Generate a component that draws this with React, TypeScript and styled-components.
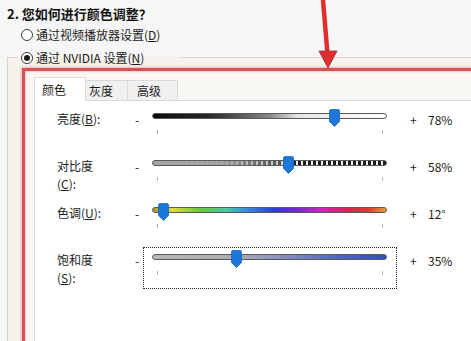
import React from 'react';
import styled, { createGlobalStyle } from 'styled-components';

const Global = createGlobalStyle`
  html, body { margin: 0; padding: 0; background: #f6f6f6; }
  body { font-family: "Noto Sans CJK SC", "Noto Sans", sans-serif; color: #1b1b1b; }
  #root { width: 471px; height: 341px; overflow: hidden; }
`;

const Page = styled.div`
  position: relative;
  width: 471px;
  height: 341px;
  overflow: hidden;
  background: #f6f6f6;
`;

const Title = styled.div`
  padding: 5px 0 0 7px;
  font-size: 13px;
  font-weight: 700;
  line-height: 18px;
  color: #111;
`;

const RadioLabel = styled.label`
  display: flex;
  align-items: center;
  gap: 3px;
  font-size: 12px;
  line-height: 17px;
  color: #1b1b1b;
  white-space: nowrap;
`;

const TopRadio = styled(RadioLabel)`
  margin: 3px 0 0 21px;
`;

const Circle = styled.span<{ $on?: boolean }>`
  box-sizing: border-box;
  width: 12px;
  height: 12px;
  border-radius: 50%;
  border: 1px solid #3a3a3a;
  background: #fff;
  display: flex;
  align-items: center;
  justify-content: center;
  &::after {
    content: '';
    width: 6px;
    height: 6px;
    border-radius: 50%;
    background: ${(p) => (p.$on ? '#1a1a1a' : 'transparent')};
  }
`;

const Key = styled.span`
  text-decoration: underline;
`;

const Group = styled.fieldset`
  margin: 6px 0 0 7px;
  padding: 0;
  border: 1px solid #d4d4d4;
  border-right: none;
  border-bottom: none;
  background: #f4f2eb;
  min-width: 0;
  height: 300px;
`;

const Legend = styled.legend`
  margin-left: 10px;
  padding: 0 37px 0 3px;
`;

const Highlight = styled.div`
  margin: 2px 0 0 14px;
  width: 470px;
  height: 290px;
  border: 3px solid #d8505a;
  box-shadow: 0 0 2px 1px rgba(225, 110, 120, 0.45), inset 0 0 2px 1px rgba(225, 110, 120, 0.3);
  background: #f9f7f3;
  padding: 6px 0 0 9px;
`;

const TabStrip = styled.div`
  display: flex;
  align-items: flex-end;
  height: 23px;
`;

const Tab = styled.div<{ $active?: boolean; $w: number; $pl: number; $first?: boolean }>`
  box-sizing: border-box;
  width: ${(p) => p.$w}px;
  padding-left: ${(p) => p.$pl}px;
  padding-top: ${(p) => (p.$active ? 3 : 1)}px;
  height: ${(p) => (p.$active ? 24 : 20)}px;
  margin-bottom: ${(p) => (p.$active ? -1 : 0)}px;
  font-size: 12px;
  line-height: 17px;
  color: #1b1b1b;
  background: ${(p) => (p.$active ? '#fff' : '#f0f0f0')};
  border: 1px solid #d9d9d9;
  border-bottom: none;
  border-left: ${(p) => (p.$first ? '1px solid #d9d9d9' : 'none')};
  position: relative;
  z-index: ${(p) => (p.$active ? 1 : 0)};
`;

const Panel = styled.div`
  background: #fff;
  border-top: 1px solid #d9d9d9;
  border-left: 1px solid #d9d9d9;
  height: 260px;
  padding: 5px 0 0 22px;
  display: grid;
  grid-template-columns: 78px 8px 254px 31px auto;
  grid-auto-rows: 42px;
  row-gap: 5px;
  align-content: start;
`;

const Label = styled.div`
  padding-top: 4px;
  max-width: 50px;
  font-size: 12px;
  line-height: 18px;
  color: #1b1b1b;
`;

const Sign = styled.div<{ $pl?: number }>`
  padding-top: 5px;
  padding-left: ${(p) => p.$pl ?? 0}px;
  font-size: 12px;
  line-height: 17px;
  color: #1b1b1b;
`;

const SliderBox = styled.div<{ $focus?: boolean }>`
  box-sizing: border-box;
  height: 42px;
  border: 1px dotted ${(p) => (p.$focus ? '#222' : 'transparent')};
`;

type Kind = 'bright' | 'contrast' | 'hue' | 'sat';

const trackBg: Record<Kind, string> = {
  bright: 'linear-gradient(to right, #0a0a0a 0%, #2a2a2a 25%, #888 50%, #e6e6e6 62%, #fff 100%)',
  contrast:
    'linear-gradient(to right, #a4a4a4 0%, rgba(164,164,164,0.95) 30%, rgba(164,164,164,0.4) 55%, rgba(164,164,164,0) 62%), repeating-linear-gradient(to right, #1a1a1a 0 3px, #f2f2f2 3px 5px)',
  hue: 'linear-gradient(to right, #a89432 0%, #e0dc40 8%, #6cc83c 20%, #48c8a8 32%, #3a8ee0 40%, #2a3cd0 52%, #7a2ad0 62%, #c828b8 72%, #d02850 84%, #d83a30 92%, #e0a040 100%)',
  sat: 'linear-gradient(to right, #b8b8b8 0%, #acacb2 35%, #8a90bc 55%, #5068c4 78%, #3050c0 100%)',
};

const Track = styled.div<{ $kind: Kind }>`
  position: relative;
  box-sizing: border-box;
  height: 6px;
  margin: 6px 9px 0 8px;
  border: 1px solid #5a5a5a;
  border-radius: 3px;
  background: ${(p) => trackBg[p.$kind]};
`;

const Thumb = styled.svg`
  position: absolute;
  top: -5px;
  width: 11px;
  height: 18px;
  overflow: visible;
`;

const Ticks = styled.div`
  display: flex;
  justify-content: space-between;
  padding: 0 13px;
  margin-top: 11px;
`;

const Tick = styled.span`
  width: 1px;
  height: 4px;
  background: #b8b8b8;
`;

const Arrow = styled.svg`
  position: absolute;
  left: 310px;
  top: 0;
  width: 30px;
  height: 72px;
  z-index: 5;
`;

type Row = { label: React.ReactNode; kind: Kind; pct: number; value: string; focus?: boolean };

const rows: Row[] = [
  { label: <>亮度(<Key>B</Key>):</>, kind: 'bright', pct: 78, value: '78%' },
  { label: <>对比度(<Key>C</Key>):</>, kind: 'contrast', pct: 58, value: '58%' },
  { label: <>色调(<Key>U</Key>):</>, kind: 'hue', pct: 4.7, value: '12°' },
  { label: <>饱和度(<Key>S</Key>):</>, kind: 'sat', pct: 36, value: '35%', focus: true },
];

export default function App() {
  return (
    <Page>
      <Global />
      <Title>2. 您如何进行颜色调整？</Title>
      <TopRadio>
        <Circle />
        <span>通过视频播放器设置(<Key>D</Key>)</span>
      </TopRadio>
      <Group>
        <Legend>
          <RadioLabel>
            <Circle $on />
            <span>通过 NVIDIA 设置(<Key>N</Key>)</span>
          </RadioLabel>
        </Legend>
        <Highlight>
          <TabStrip>
            <Tab $active $first $w={52} $pl={7}>颜色</Tab>
            <Tab $w={42} $pl={3}>灰度</Tab>
            <Tab $w={50} $pl={9}>高级</Tab>
          </TabStrip>
          <Panel>
            {rows.map((r, i) => (
              <React.Fragment key={i}>
                <Label>{r.label}</Label>
                <Sign>-</Sign>
                <SliderBox $focus={r.focus}>
                  <Track $kind={r.kind}>
                    <Thumb viewBox="0 0 11 18" style={{ left: `calc(${r.pct}% - 5.5px)` }}>
                      <path
                        d="M0.5 2 Q0.5 0.5 2 0.5 H9 Q10.5 0.5 10.5 2 V12.5 L5.5 17.5 L0.5 12.5 Z"
                        fill="#1c78d8"
                        stroke="#1566bf"
                        strokeWidth="0.8"
                      />
                    </Thumb>
                  </Track>
                  <Ticks>
                    <Tick />
                    <Tick />
                  </Ticks>
                </SliderBox>
                <Sign $pl={13}>+</Sign>
                <Sign>{r.value}</Sign>
              </React.Fragment>
            ))}
          </Panel>
        </Highlight>
      </Group>
      <Arrow viewBox="0 0 30 72">
        <line x1="13" y1="0" x2="17.5" y2="54" stroke="#dd2f30" strokeWidth="4.5" />
        <polygon points="9,51 27,51 18,68" fill="#dd2f30" stroke="#9a3030" strokeWidth="0.8" strokeLinejoin="round" />
      </Arrow>
    </Page>
  );
}
